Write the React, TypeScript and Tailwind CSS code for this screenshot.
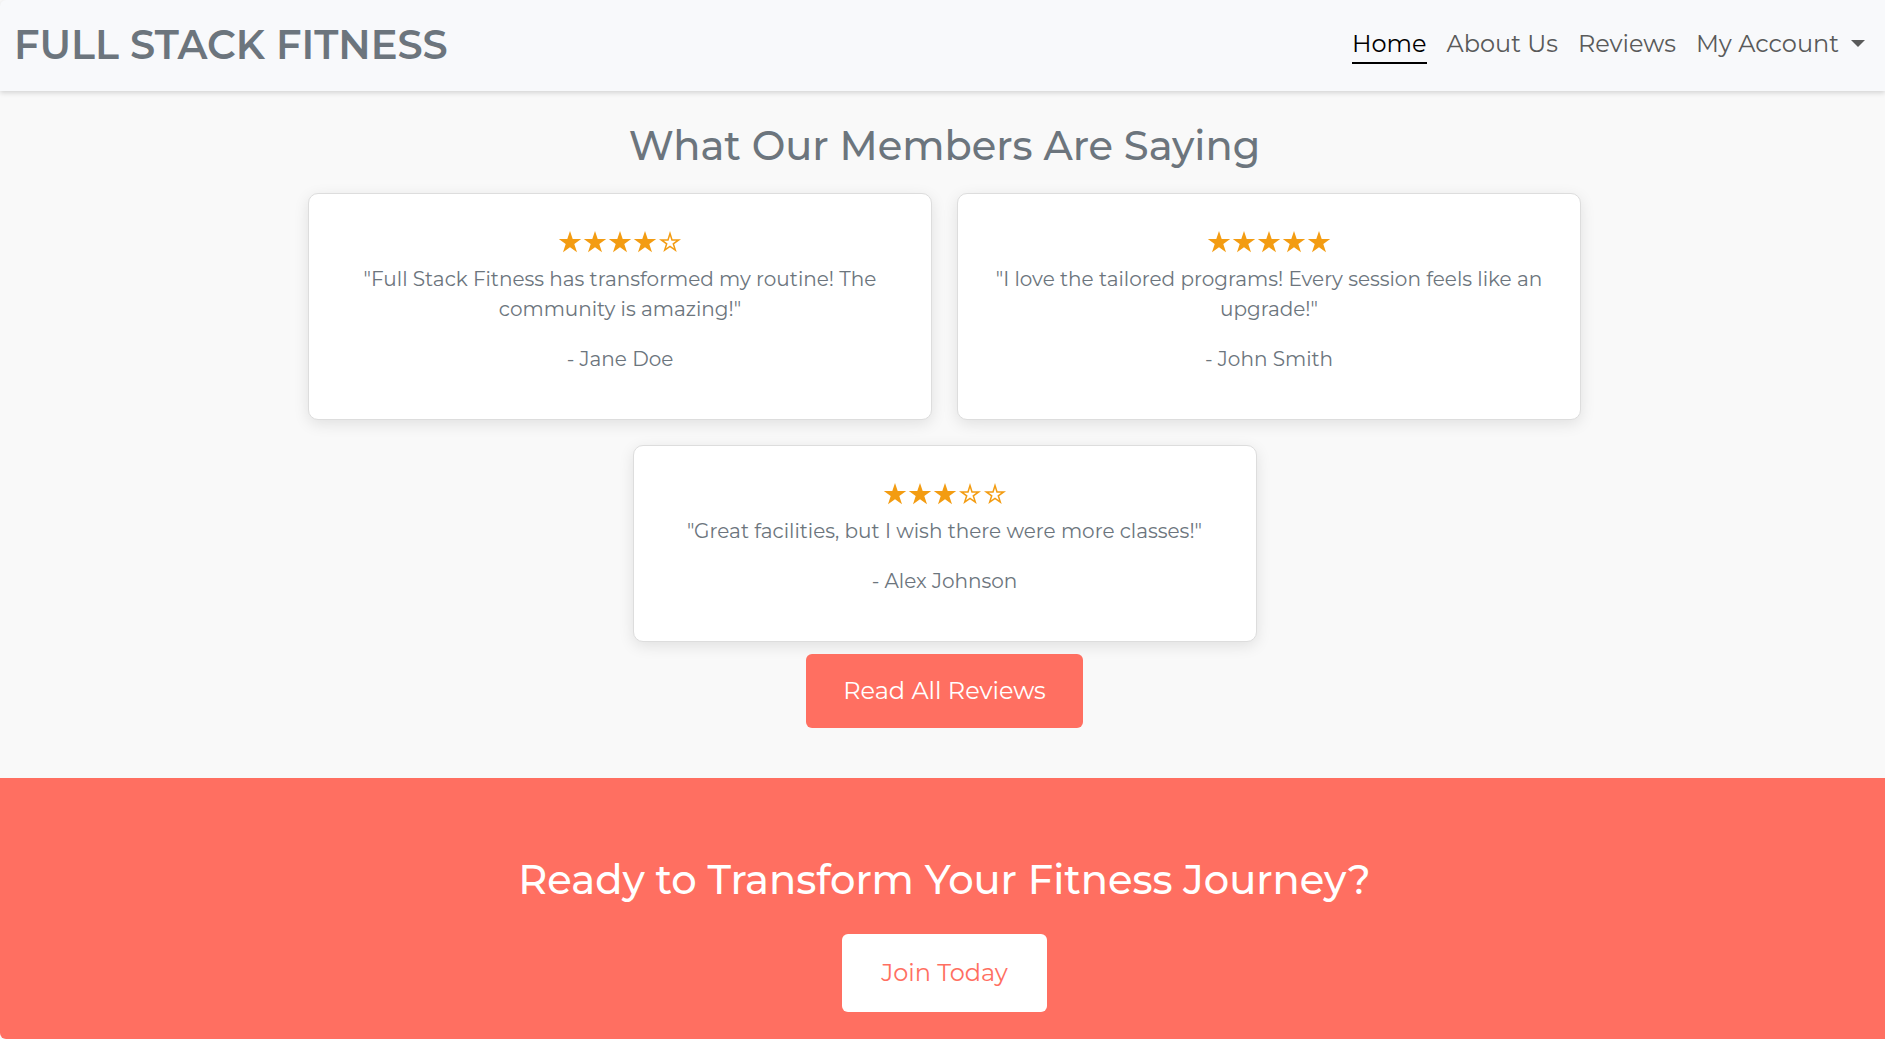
const STAR_POINTS =
  "12,1 14.7,9.1 23.2,9.1 16.3,14.1 19,22.3 12,17.3 5,22.3 7.7,14.1 0.8,9.1 9.3,9.1";

const reviews = [
  {
    name: "Jane Doe",
    rating: 4,
    quote: "Full Stack Fitness has transformed my routine! The community is amazing!",
  },
  {
    name: "John Smith",
    rating: 5,
    quote: "I love the tailored programs! Every session feels like an upgrade!",
  },
  {
    name: "Alex Johnson",
    rating: 3,
    quote: "Great facilities, but I wish there were more classes!",
  },
];

const links = ["About Us", "Reviews"];

function Star({ filled }: { filled: boolean }) {
  return (
    <svg viewBox="0 0 24 24" className="size-6" aria-hidden="true">
      {filled ? (
        <polygon points={STAR_POINTS} fill="#f39c12" />
      ) : (
        <polygon
          points="12,3.6 14,9.9 20.7,9.9 15.3,13.8 17.3,20.1 12,16.3 6.7,20.1 8.7,13.8 3.3,9.9 10,9.9"
          fill="none"
          stroke="#f39c12"
          strokeWidth="1.5"
        />
      )}
    </svg>
  );
}

function ReviewCard({ name, rating, quote }: (typeof reviews)[number]) {
  return (
    <article className="w-full max-w-[624px] rounded-[10px] border border-[#dddddd] bg-white px-6 pt-9 pb-[45px] text-center shadow-[0_4px_15px_rgba(0,0,0,0.1)]">
      <div
        role="img"
        aria-label={`${rating} out of 5 stars`}
        className="mb-2.5 flex justify-center gap-px"
      >
        {[1, 2, 3, 4, 5].map((n) => (
          <Star key={n} filled={n <= rating} />
        ))}
      </div>
      <p className="mb-5 text-xl leading-[30px]">"{quote}"</p>
      <p className="text-xl leading-[30px]">- {name}</p>
    </article>
  );
}

export default function App() {
  return (
    <div className="flex min-h-screen flex-col bg-[#f9f9f9] font-['Montserrat',sans-serif] text-[#6c757d]">
      <header className="relative flex items-center justify-between rounded-tl-md bg-[#f8f9fb] pt-[17px] pr-5 pb-[19px] pl-3.5 shadow-[0_2px_5px_rgba(0,0,0,0.15)]">
        <a href="#" className="text-[40px] leading-[55px] font-semibold">
          FULL STACK FITNESS
        </a>
        <nav className="flex items-center gap-5 text-2xl leading-9 text-[#595a5a]">
          <a href="#" aria-current="page" className="border-b-2 border-black text-black">
            Home
          </a>
          {links.map((link) => (
            <a key={link} href="#" className="border-b-2 border-transparent">
              {link}
            </a>
          ))}
          <button
            type="button"
            aria-haspopup="true"
            className="flex items-center gap-3 border-b-2 border-transparent"
          >
            My Account
            <svg viewBox="0 0 14 7" className="h-[7px] w-[14px]" aria-hidden="true">
              <path d="M0 0h14L7 7z" fill="currentColor" />
            </svg>
          </button>
        </nav>
      </header>

      <main className="flex grow flex-col">
        <section className="flex flex-col items-center pt-[31px] pb-[50px] pl-1">
          <h2 className="mb-[23px] text-[40px] leading-12 font-medium">
            What Our Members Are Saying
          </h2>
          <div className="flex w-full flex-wrap justify-center gap-[25px]">
            {reviews.map((review) => (
              <ReviewCard key={review.name} {...review} />
            ))}
          </div>
          <a
            href="#"
            className="mt-3 rounded-md bg-[#ff6f61] px-[37px] py-[18px] text-2xl leading-[38px] text-white"
          >
            Read All Reviews
          </a>
        </section>

        <section className="flex grow flex-col items-center rounded-bl-md bg-[#ff6f61] pt-[78px] pb-[27px] pl-1">
          <h2 className="mb-[30px] text-[40px] leading-12 font-medium text-white">
            Ready to Transform Your Fitness Journey?
          </h2>
          <a
            href="#"
            className="rounded-md bg-white px-[39px] py-5 text-2xl leading-[38px] text-[#ff6f61]"
          >
            Join Today
          </a>
        </section>
      </main>
    </div>
  );
}
